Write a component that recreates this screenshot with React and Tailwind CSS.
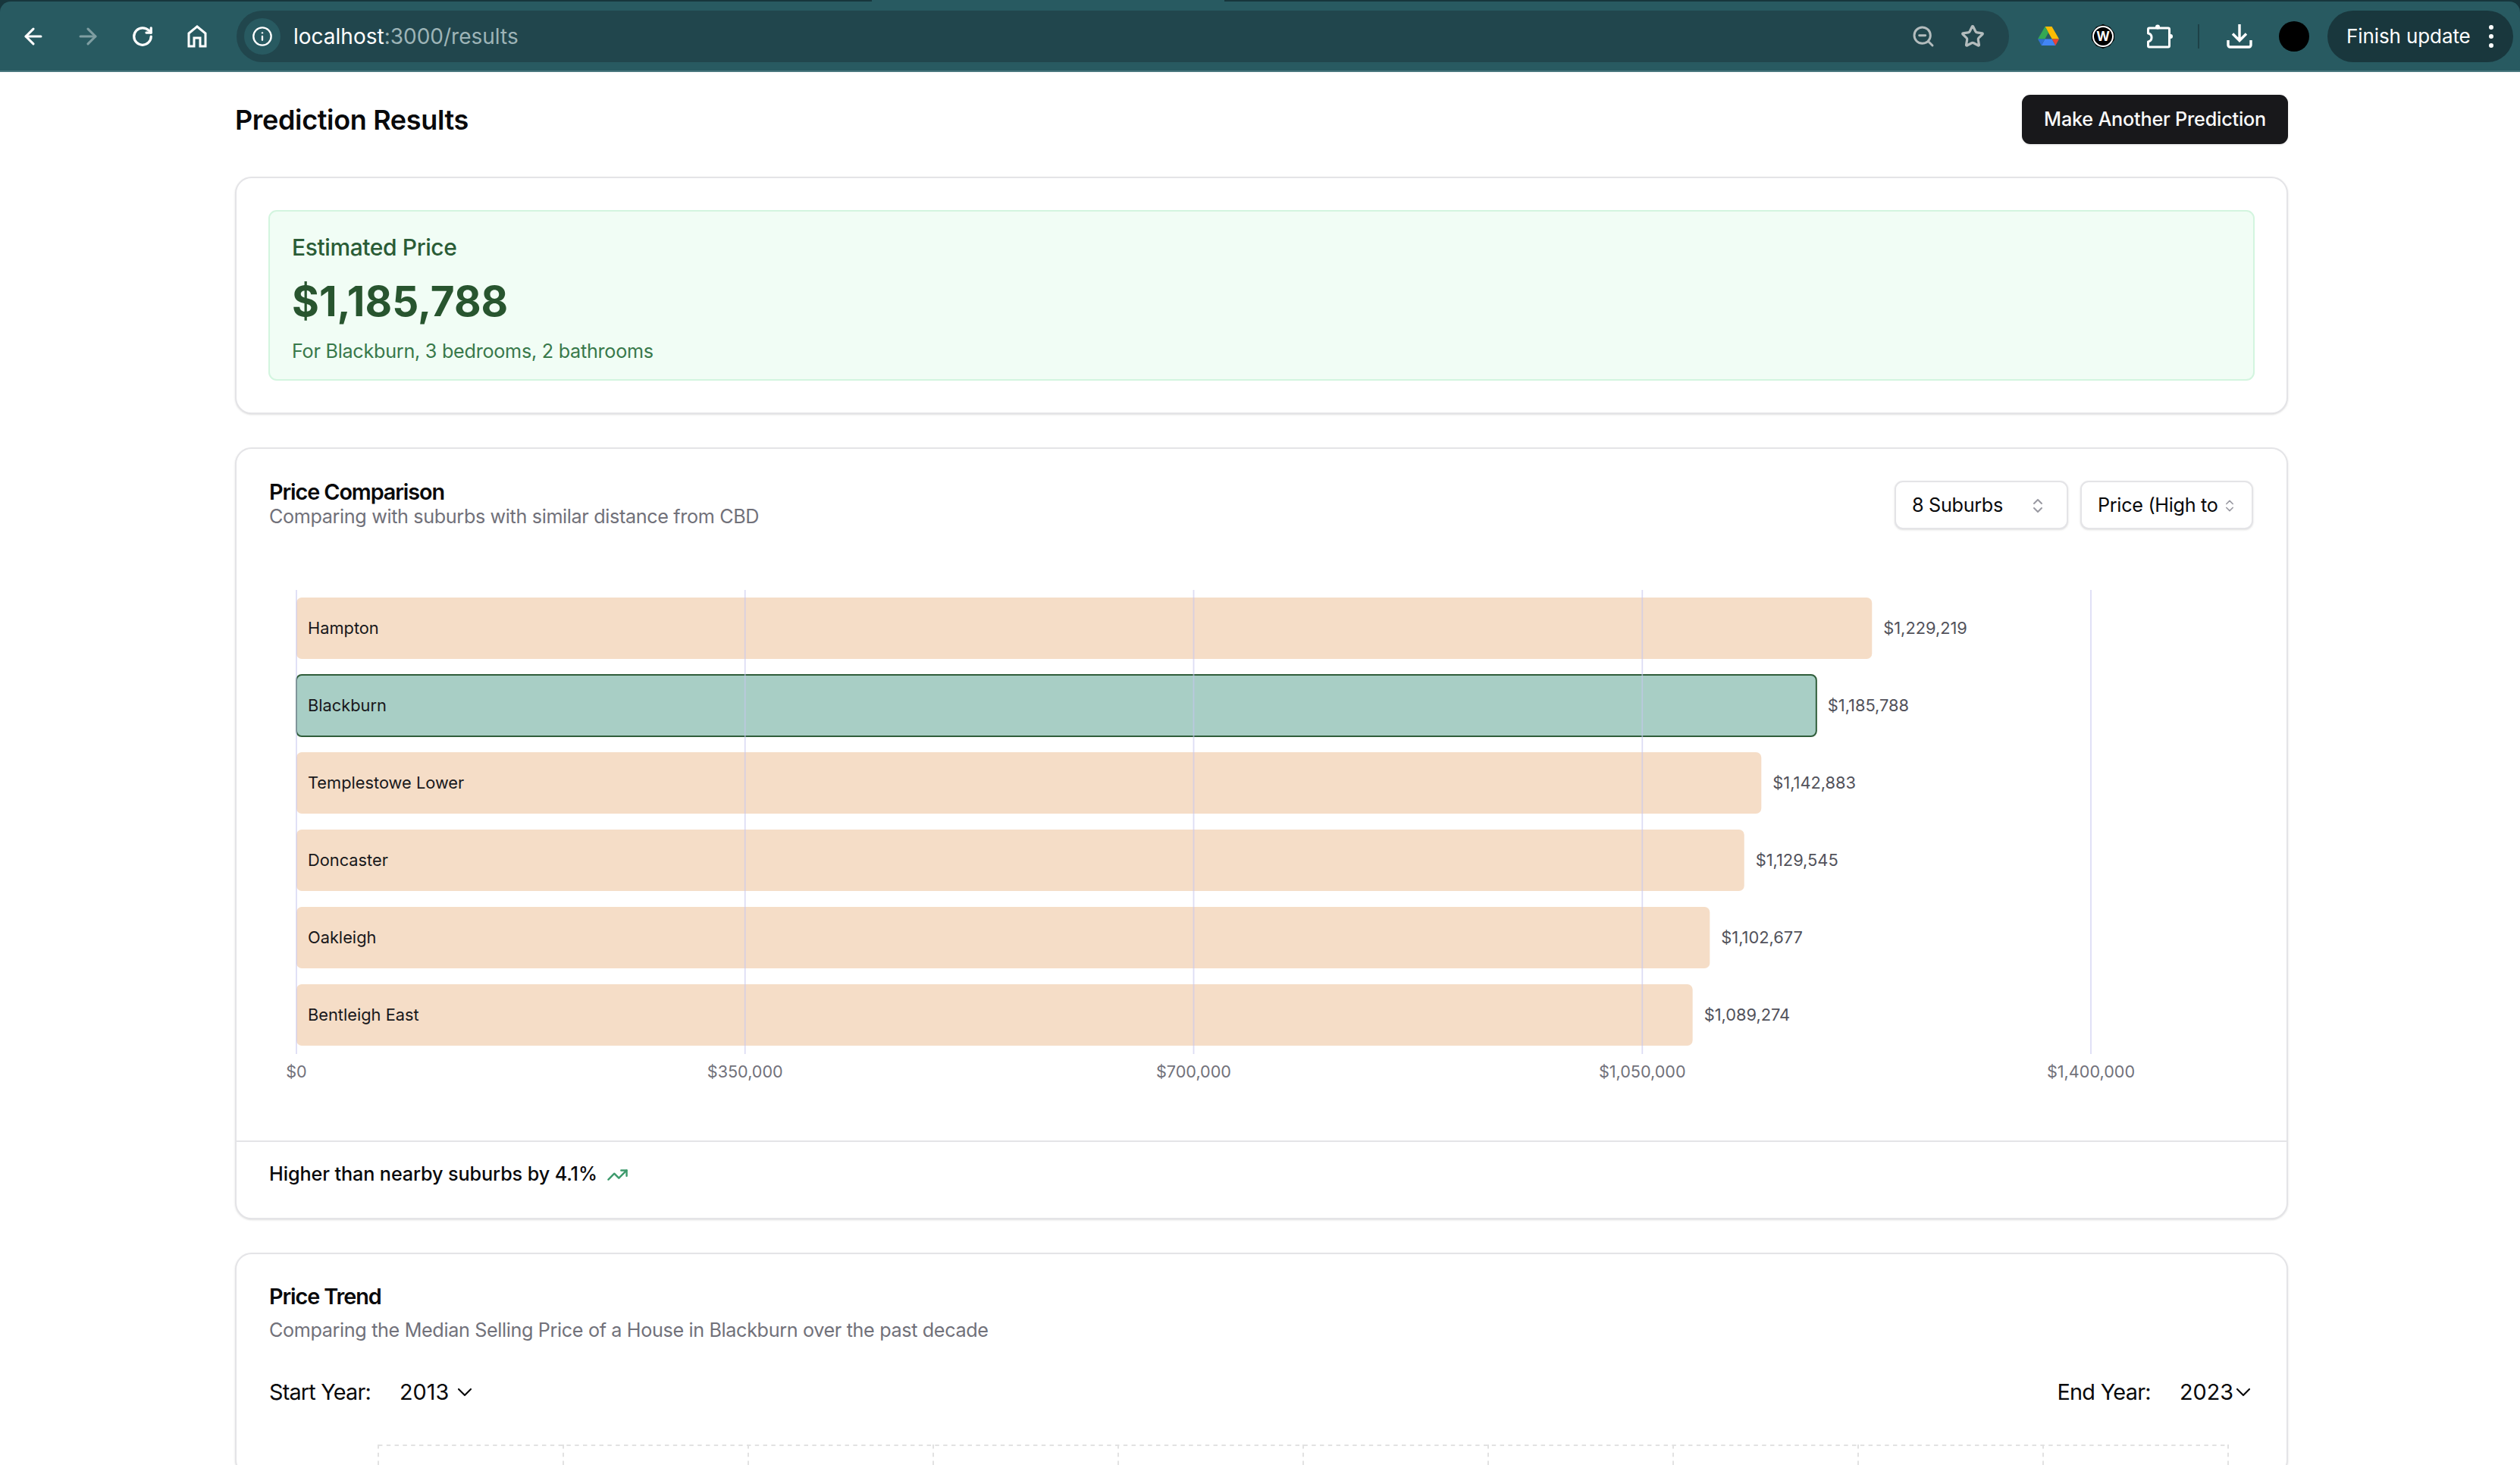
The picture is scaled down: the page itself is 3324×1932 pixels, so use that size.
import { TrendingUp, ChevronDown, ChevronsUpDown, ArrowLeft, ArrowRight, RotateCw, Info, Star, ZoomOut } from "lucide-react";

const bars = [
  { name: "Hampton", value: 1229219 },
  { name: "Blackburn", value: 1185788, active: true },
  { name: "Templestowe Lower", value: 1142883 },
  { name: "Doncaster", value: 1129545 },
  { name: "Oakleigh", value: 1102677 },
  { name: "Bentleigh East", value: 1089274 },
];

const ticks = [0, 350000, 700000, 1050000, 1400000];
const money = (n) => "$" + n.toLocaleString("en-US");

// chart svg starts at x=355 on the page, so x0 is 36
function BarChart() {
  const x0 = 36;
  const unit = 2367 / 1400000;
  return (
    <svg width="2663" height="660" className="block">
      {bars.map((b, i) => {
        const y = 10 + i * 102;
        const w = b.value * unit;
        return (
          <g key={b.name}>
            <rect
              x={x0}
              y={y}
              width={w}
              height={81}
              rx={7}
              fill={b.active ? "#a8cec5" : "#f5ddc7"}
              stroke={b.active ? "#2f5d3a" : "none"}
              strokeWidth={b.active ? 2 : 0}
            />
            <text x={x0 + 15} y={y + 48} fontSize="21.8" fill="#18181b">
              {b.name}
            </text>
            <text x={x0 + w + 15} y={y + 48} fontSize="21.8" fill="#52525b">
              {money(b.value)}
            </text>
          </g>
        );
      })}
      {ticks.map((t) => {
        const x = x0 + t * unit;
        return (
          <g key={t}>
            <line x1={x} x2={x} y1={0} y2={612} stroke="#c6c6ee" strokeOpacity="0.6" strokeWidth="1.8" />
            <text x={x} y={643} fontSize="21.6" fill="#71717a" textAnchor="middle">
              {money(t)}
            </text>
          </g>
        );
      })}
    </svg>
  );
}

function TrendGrid() {
  const xs = Array.from({ length: 11 }, (_, i) => 144 + i * 244);
  return (
    <svg width="2663" height="40" className="block">
      <line x1="144" x2="2584" y1="1" y2="1" stroke="#e2e2e2" strokeWidth="2" strokeDasharray="5.4 5.4" />
      {xs.map((x) => (
        <line key={x} x1={x} x2={x} y1="0" y2="40" stroke="#e2e2e2" strokeWidth="2" strokeDasharray="5.4 5.4" />
      ))}
    </svg>
  );
}

function DriveIcon() {
  return (
    <svg width="28" height="25" viewBox="0 0 28 25">
      <path d="M18.5 0L28 16.5h-9.3L9.5 0z" fill="#fbbc04" />
      <path d="M9.5 0L14 8l-4.7 8.5H0z" fill="#34a853" />
      <path d="M9.3 16.5h9.4l4.6 8.5H4.7z" fill="#4285f4" />
      <path d="M0 16.5h9.3L4.7 25z" fill="#2f6fd0" />
      <path d="M18.7 16.5H28L23.3 25z" fill="#ea4335" />
    </svg>
  );
}

function WIcon() {
  return (
    <svg width="32" height="32" viewBox="0 0 32 32">
      <path d="M16 0l9 3.5 6 8v9l-6 8-9 3.5-9-3.5-6-8v-9l6-8z" fill="#000" />
      <circle cx="16" cy="16" r="13" fill="#000" stroke="#fff" strokeWidth="2" />
      <text x="16" y="22" fontSize="17" fontWeight="700" fill="#fff" textAnchor="middle">
        W
      </text>
    </svg>
  );
}

function PuzzleIcon() {
  return (
    <svg width="36" height="32" viewBox="0 0 36 32" fill="none" stroke="#fff" strokeWidth="3" className="ml-[3px]">
      <path
        d="M5 5h25a1.5 1.5 0 0 1 1.5 1.5v22a1.5 1.5 0 0 1-1.5 1.5H5a1.5 1.5 0 0 1-1.5-1.5V23a5.6 5.6 0 0 0 0-11V6.5A1.5 1.5 0 0 1 5 5z"
        strokeLinejoin="round"
      />
      <circle cx="16" cy="3.5" r="3" fill="#fff" stroke="none" />
      <circle cx="33" cy="16" r="3" fill="#fff" stroke="none" />
    </svg>
  );
}

function HomeIcon() {
  return (
    <svg width="26" height="30" viewBox="0 0 26 30" fill="none" stroke="#fff" strokeWidth="3">
      <path d="M2 28V11L13 2l11 9v17h-7V17H9v11z" strokeLinejoin="miter" />
    </svg>
  );
}

function DownloadIcon() {
  return (
    <svg width="34" height="32" viewBox="0 0 34 32" fill="none" stroke="#fff" strokeWidth="3.4">
      <path d="M17 0v21M8 12.5l9 9 9-9" />
      <path d="M2 21v6.5a2.5 2.5 0 0 0 2.5 2.5h25a2.5 2.5 0 0 0 2.5-2.5V21" />
    </svg>
  );
}

function ToolButton({ children }) {
  return <div className="flex h-[72px] w-[72px] items-center justify-center">{children}</div>;
}

function Chrome() {
  return (
    <div className="bg-[#17363c]">
      <div className="flex h-[2px] pl-[1150px]">
        <div className="w-[465px] bg-[#285a61]" />
      </div>
      <div className="flex h-[93px] items-center rounded-tl-[14px] rounded-tr-[14px] border-b-2 border-[#4a787e] bg-[#285a61] pl-[8px] pr-[9px]">
        <ToolButton>
          <ArrowLeft size={34} color="#fff" strokeWidth={2.2} />
        </ToolButton>
        <ToolButton>
          <ArrowRight size={34} color="#7f9ea2" strokeWidth={2.2} />
        </ToolButton>
        <ToolButton>
          <RotateCw size={30} color="#fff" strokeWidth={2.6} />
        </ToolButton>
        <ToolButton>
          <HomeIcon />
        </ToolButton>
        <div className="ml-4 flex h-[68px] flex-1 items-center rounded-full bg-[#21464d] pl-[10px] pr-[32px]">
          <div className="flex h-[48px] w-[48px] items-center justify-center rounded-full bg-[#285a61]">
            <Info size={28} color="#fff" strokeWidth={2} />
          </div>
          <div className="ml-[17px] flex-1 text-[28px] text-white">
            localhost<span className="text-[#9db4b7]">:3000/results</span>
          </div>
          <ZoomOut size={32} color="#b3bcbd" strokeWidth={2.2} className="mr-[33px]" />
          <Star size={32} color="#b3bcbd" strokeWidth={2.4} />
        </div>
        <div className="ml-4 flex items-center">
          <ToolButton>
            <DriveIcon />
          </ToolButton>
          <ToolButton>
            <WIcon />
          </ToolButton>
          <ToolButton>
            <PuzzleIcon />
          </ToolButton>
          <div className="ml-[17px] mr-[17px] h-[32px] w-[2px] bg-[#1d4147]" />
          <ToolButton>
            <DownloadIcon />
          </ToolButton>
          <ToolButton>
            <div className="h-[40px] w-[40px] rounded-full bg-black" />
          </ToolButton>
        </div>
        <div className="ml-2 flex h-[68px] w-[245px] items-center rounded-full bg-[#19373d] pl-[25px] text-[26px] tracking-[-0.1px] text-white">
          <span>Finish update</span>
          <div className="ml-[24px] flex flex-col gap-[6px]">
            <div className="h-[6px] w-[6px] rounded-full bg-white" />
            <div className="h-[6px] w-[6px] rounded-full bg-white" />
            <div className="h-[6px] w-[6px] rounded-full bg-white" />
          </div>
        </div>
      </div>
    </div>
  );
}

export default function App() {
  return (
    <div className="h-[1932px] w-[3324px] overflow-hidden bg-white font-[Inter,sans-serif] text-[#09090b]">
      <Chrome />
      <div className="pl-[310px] pr-[306px] pt-[30px]">
        <div className="flex items-center justify-between">
          <h1 className="text-[36px] font-semibold tracking-[-0.35px]">Prediction Results</h1>
          <button className="flex h-[65px] items-center rounded-[11px] bg-[#18181b] px-[29px] text-[25.2px] font-medium tracking-[-0.2px] text-[#fafafa] shadow-sm">
            Make Another Prediction
          </button>
        </div>

        <div className="mt-[43px] rounded-[22px] border-2 border-[#e4e4e7] bg-white p-[42px] shadow-sm">
          <div className="h-[225px] rounded-[11px] border-2 border-[#d3f5df] bg-[#f1fdf5] pl-[29px] pt-[25px]">
            <p className="text-[30px] font-medium leading-[44px] tracking-[-0.4px] text-[#2a5c36]">Estimated Price</p>
            <p className="mt-[13px] text-[54.8px] font-bold leading-[72px] text-[#28552f]">$1,185,788</p>
            <p className="mt-[12px] text-[25.2px] leading-[36px] tracking-[-0.27px] text-[#38794a]">
              For Blackburn, 3 bedrooms, 2 bathrooms
            </p>
          </div>
        </div>

        <div className="mt-[44px] h-[1018px] rounded-[22px] border-2 border-[#e4e4e7] bg-white shadow-sm">
          <div className="flex items-start justify-between pl-[43px] pr-[44px] pt-[42px]">
            <div className="-mt-[2px]">
              <h2 className="text-[28.8px] font-semibold leading-[34px] tracking-[-1.1px]">Price Comparison</h2>
              <p className="text-[25.2px] leading-[30px] tracking-[-0.36px] text-[#71717a]">
                Comparing with suburbs with similar distance from CBD
              </p>
            </div>
            <div className="flex gap-[16px]">
              <div className="flex h-[64px] w-[229px] items-center justify-between rounded-[11px] border-2 border-[#e4e4e7] bg-white pb-[0px] pl-[21px] pr-[26px] pt-[2px] text-[25.2px] tracking-[-0.3px] shadow-sm">
                8 Suburbs
                <ChevronsUpDown size={24} color="#9a9aa2" strokeWidth={2} />
              </div>
              <div className="flex h-[64px] w-[228px] items-center rounded-[11px] border-2 border-[#e4e4e7] bg-white pl-[21px] pt-[2px] text-[25.2px] tracking-[-0.3px] shadow-sm">
                <span className="w-[160px] shrink-0 whitespace-nowrap">Price (High to</span>
                <ChevronsUpDown size={20} color="#9a9aa2" strokeWidth={2} className="ml-[4px] shrink-0" />
              </div>
            </div>
          </div>
          <div className="mt-[80px] pl-[43px]">
            <BarChart />
          </div>
          <div className="mt-[66px] flex h-[100px] items-center gap-[12px] border-t-2 border-[#e4e4e7] px-[43px] pb-[12px] text-[25.2px] font-medium tracking-[-0.1px]">
            Higher than nearby suburbs by 4.1%
            <TrendingUp size={29} color="#3d9a6c" />
          </div>
        </div>

        <div className="mt-[44px] rounded-[22px] border-2 border-[#e4e4e7] bg-white px-[43px] pt-[36px] shadow-sm">
          <h2 className="text-[28.8px] font-semibold leading-[40px] tracking-[-1.1px]">Price Trend</h2>
          <p className="mt-[6px] text-[25.2px] leading-[36px] tracking-[-0.36px] text-[#71717a]">
            Comparing the Median Selling Price of a House in Blackburn over the past decade
          </p>
          <div className="mt-[42px] flex items-center justify-between text-[28.8px]">
            <div className="flex items-center">
              <span className="tracking-[-0.8px]">Start Year:</span>
              <span className="ml-[38px]">2013</span>
              <ChevronDown size={32} strokeWidth={1.6} className="ml-[5px]" />
            </div>
            <div className="flex items-center">
              <span className="tracking-[-0.7px]">End Year:</span>
              <span className="ml-[38px]">2023</span>
              <ChevronDown size={32} strokeWidth={1.6} className="-ml-[3px] -mr-[2px]" />
            </div>
          </div>
          <div className="mt-[48px]">
            <TrendGrid />
          </div>
        </div>
      </div>
    </div>
  );
}
